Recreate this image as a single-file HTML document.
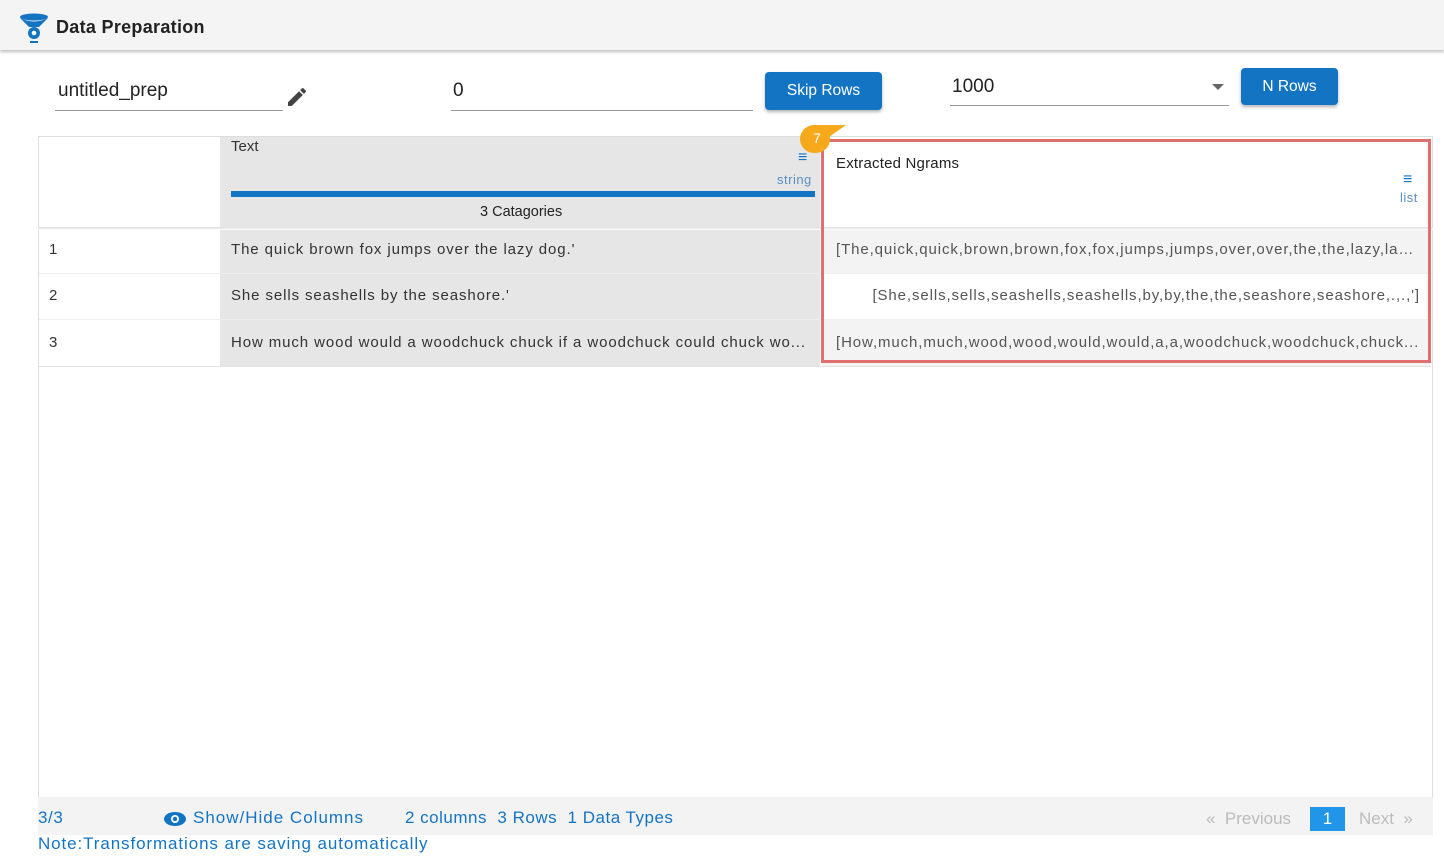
<!DOCTYPE html>
<html><head><style>
*{box-sizing:border-box;margin:0;padding:0}
body{width:1444px;height:865px;background:#fff;font-family:"Liberation Sans",sans-serif;position:relative;overflow:hidden;color:#222}
.a{position:absolute}
.hdr{left:0;top:0;width:1444px;height:50px;background:#f4f4f4;box-shadow:0 2px 3px rgba(0,0,0,.25)}
.btn{background:#1474c4;color:#fff;border-radius:4px;font-size:15.5px;text-align:center;box-shadow:0 2px 3px rgba(0,0,0,.3)}
.in{border-bottom:1px solid #999;font-size:19px;color:#222;padding-top:4px}
.cell{font-size:15px;letter-spacing:.9px;color:#333;white-space:nowrap;overflow:hidden}
.blue{color:#1474c4}
.ft{font-size:17px;letter-spacing:.6px}
</style></head><body>
<div class="a hdr"></div>
<svg class="a" style="left:19px;top:13px" width="30" height="32" viewBox="0 0 30 32">
<ellipse cx="15" cy="4" rx="14" ry="3.5" fill="#1474c4"/>
<path d="M1 5 Q15 12 29 5 L20 14 L10 14 Z" fill="#1474c4"/>
<circle cx="15" cy="20" r="6" fill="#1474c4"/><circle cx="15" cy="20" r="2.3" fill="#fff"/>
<rect x="11" y="28" width="8" height="2" fill="#1474c4"/>
</svg>
<div class="a" style="left:56px;top:17px;font-size:18px;font-weight:bold;color:#222;letter-spacing:.3px">Data Preparation</div>

<div class="a in" style="left:55px;top:76px;width:228px;height:35px;padding-left:3px">untitled_prep</div>
<svg class="a" style="left:285px;top:85px" width="24" height="24" viewBox="0 0 24 24"><path d="M3 17.25V21h3.75L17.81 9.94l-3.75-3.75L3 17.25zM20.71 7.04a1 1 0 000-1.41l-2.34-2.34a1 1 0 00-1.41 0l-1.83 1.83 3.75 3.75 1.83-1.83z" fill="#444"/></svg>
<div class="a in" style="left:451px;top:76px;width:302px;height:35px;padding-left:2px">0</div>
<div class="a btn" style="left:765px;top:72px;width:117px;height:38px;line-height:38px">Skip Rows</div>
<div class="a in" style="left:950px;top:72px;width:279px;height:34px;padding-left:2px">1000</div>
<div class="a" style="left:1212px;top:84px;border-left:6px solid transparent;border-right:6px solid transparent;border-top:6px solid #666"></div>
<div class="a btn" style="left:1241px;top:68px;width:97px;height:37px;line-height:37px">N Rows</div>

<div class="a" style="left:38px;top:136px;width:1395px;height:662px;border:1px solid #ddd"></div>
<div class="a" style="left:220px;top:137px;width:600px;height:91px;background:#e6e6e6"></div>
<div class="a" style="left:231px;top:138px;font-size:15px;color:#333">Text</div>
<div class="a blue" style="left:798px;top:150px;font-size:16px;line-height:16px">&#8801;</div>
<div class="a blue" style="left:777px;top:172px;font-size:13px;color:#5a8fc4;letter-spacing:.5px">string</div>
<div class="a" style="left:231px;top:191px;width:584px;height:6px;background:#1474c4"></div>
<div class="a" style="left:480px;top:204px;color:#222;font-size:14.5px">3 Catagories</div>
<div class="a" style="left:38px;top:227px;width:1395px;height:3px;background:linear-gradient(#ddd,#fff)"></div>

<div class="a" style="left:220px;top:230px;width:600px;height:136px;background:#e6e6e6"></div>
<div class="a" style="left:822px;top:230px;width:608px;height:44px;background:#f3f3f3"></div>
<div class="a" style="left:822px;top:320px;width:608px;height:46px;background:#f3f3f3"></div>
<div class="a" style="left:39px;top:273px;width:1392px;height:1px;background:#eee"></div>
<div class="a" style="left:39px;top:319px;width:1392px;height:1px;background:#eee"></div>
<div class="a" style="left:39px;top:366px;width:1392px;height:1px;background:#e4e4e4"></div>

<div class="a cell" style="left:49px;top:241px">1</div>
<div class="a cell" style="left:49px;top:287px">2</div>
<div class="a cell" style="left:49px;top:334px">3</div>
<div class="a cell" style="left:231px;top:241px">The quick brown fox jumps over the lazy dog.'</div>
<div class="a cell" style="left:231px;top:287px">She sells seashells by the seashore.'</div>
<div class="a cell" style="left:231px;top:334px;width:584px;text-overflow:ellipsis">How much wood would a woodchuck chuck if a woodchuck could chuck wo...</div>
<div class="a cell" style="left:836px;top:241px;width:584px;color:#555;text-overflow:ellipsis">[The,quick,quick,brown,brown,fox,fox,jumps,jumps,over,over,the,the,lazy,laz...</div>
<div class="a cell" style="left:826px;top:287px;width:594px;text-align:right;color:#555">[She,sells,sells,seashells,seashells,by,by,the,the,seashore,seashore,.,.,']</div>
<div class="a cell" style="left:836px;top:334px;width:584px;color:#555;text-overflow:ellipsis">[How,much,much,wood,wood,would,would,a,a,woodchuck,woodchuck,chuck...</div>

<div class="a" style="left:836px;top:155px;color:#222;font-size:15px;letter-spacing:.2px">Extracted Ngrams</div>
<div class="a blue" style="left:1403px;top:172px;font-size:16px;line-height:16px">&#8801;</div>
<div class="a" style="left:1400px;top:190px;font-size:13px;color:#5a8fc4;letter-spacing:.5px">list</div>
<div class="a" style="left:821px;top:139px;width:610px;height:224px;border:3px solid #e07070"></div>
<div class="a" style="left:800px;top:125px;width:30px;height:28px;background:#f5a91b;border-radius:15px 0 15px 15px"></div>
<div class="a" style="left:826px;top:125px;border-left:20px solid #f5a91b;border-bottom:14px solid transparent"></div>
<div class="a" style="left:813px;top:130px;color:#fff;font-size:14px">7</div>

<div class="a" style="left:38px;top:797px;width:1395px;height:38px;background:#f3f3f3"></div>
<div class="a blue ft" style="left:38px;top:808px">3/3</div>
<svg class="a" style="left:164px;top:811px" width="22" height="16" viewBox="0 0 22 16"><ellipse cx="11" cy="8" rx="11" ry="7" fill="#1474c4"/><circle cx="11" cy="8" r="4" fill="#fff"/><circle cx="11" cy="8" r="2.2" fill="#1474c4"/></svg>
<div class="a blue ft" style="left:193px;top:808px;letter-spacing:1px">Show/Hide Columns</div>
<div class="a blue ft" style="left:405px;top:808px;letter-spacing:.5px">2 columns&nbsp; 3 Rows&nbsp; 1 Data Types</div>
<div class="a" style="left:1206px;top:809px;font-size:17px;color:#bbb">«&nbsp; Previous</div>
<div class="a" style="left:1310px;top:807px;width:35px;height:24px;background:#2196e8;color:#fff;font-size:17px;text-align:center;line-height:24px">1</div>
<div class="a" style="left:1359px;top:809px;font-size:17px;color:#bbb">Next&nbsp; »</div>
<div class="a blue ft" style="left:38px;top:834px;letter-spacing:.9px">Note:Transformations are saving automatically</div>
</body></html>
